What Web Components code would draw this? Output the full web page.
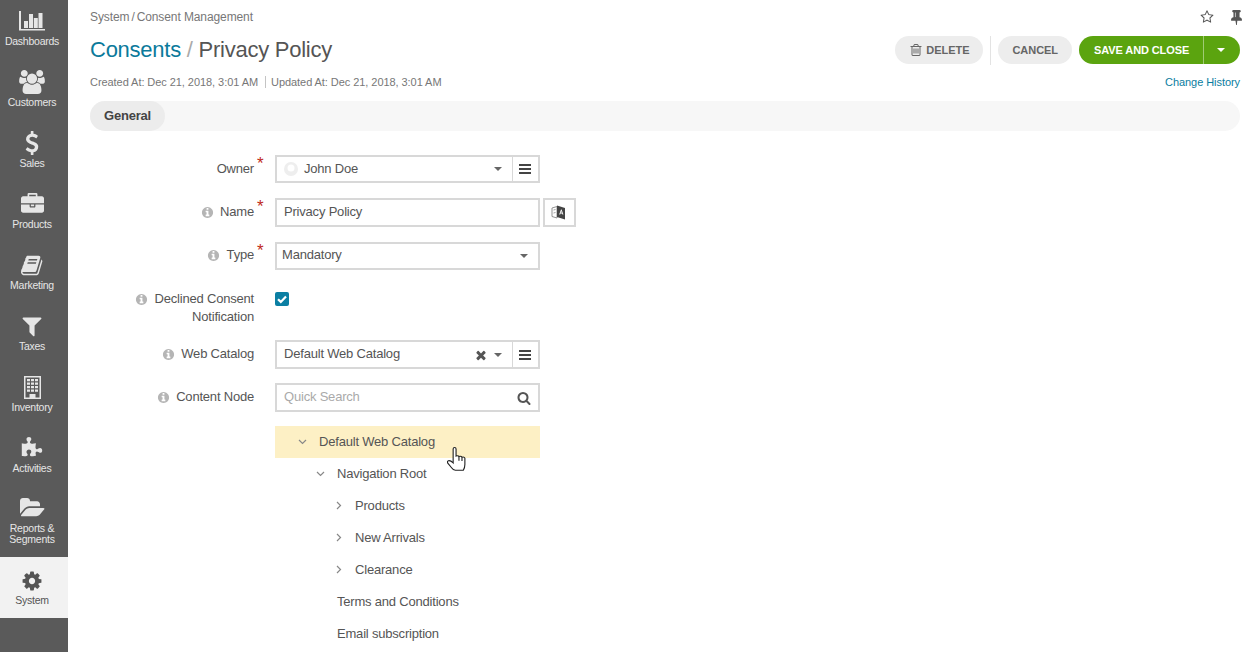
<!DOCTYPE html>
<html>
<head>
<meta charset="utf-8">
<title>Consents</title>
<style>
    html, body { margin: 0; padding: 0; height: 100%; background: #fff; }
    body { font-family: "Liberation Sans", Arial, sans-serif; overflow: hidden; }
    app-shell { height: 652px; }
</style>
</head>
<body>
<template id="nav-item-tpl">
    <style>
        :host {
            display: flex;
            flex-direction: column;
            align-items: center;
            height: 61px;
            box-sizing: border-box;
            padding: var(--icon-top, 1px) 4px 0 0;
            color: #e6e6e6;
            font-size: 10.5px;
            line-height: 11px;
            letter-spacing: -.25px;
            text-align: center;
        }
        :host([active]) { background: #f2f2f2; color: #555; padding-top: 12px; }
        .icon { display: flex; align-items: center; justify-content: center; height: 24px; margin-bottom: 3px; }
        :host([active]) .icon { margin-bottom: 2px; }
        ::slotted(svg) { fill: currentColor; display: block; }
    </style>
    <div class="icon"><slot name="icon"></slot></div>
    <div class="label"><slot></slot></div>
</template>

<template id="app-sidebar-tpl">
    <style>
        :host {
            display: block;
            width: 68px;
            flex: none;
            background: #5a5a5a;
            padding-top: 8px;
            box-sizing: border-box;
        }
    </style>
    <slot></slot>
</template>

<template id="app-shell-tpl">
    <style>
        :host { display: flex; align-items: stretch; position: relative; }
        main { flex: 1; min-width: 0; padding: 0 20px 0 22px; }
    </style>
    <slot name="side"></slot>
    <main><slot></slot></main>
</template>

<template id="page-header-tpl">
    <style>
        :host { display: block; color: #777; }
        .crumbs { display: flex; justify-content: space-between; align-items: center; height: 34px; font-size: 12px; letter-spacing: -.1px; }
        .crumbs b { font-weight: 400; margin: 0 2px; }
        .tools { display: flex; gap: 17px; align-items: center; margin-right: -2px; }
        .tools svg { display: block; fill: #555; }
        .head { display: flex; justify-content: space-between; align-items: center; height: 30px; margin-top: 1px; }
        h1 { margin: 0; font-size: 22px; font-weight: 400; color: #555; line-height: 30px; letter-spacing: -.25px; }
        h1 a { color: #0b7a9b; }
        h1 i { font-style: normal; color: #aaa; }
        .actions { display: flex; align-items: center; }
        .meta { display: flex; justify-content: space-between; align-items: center; height: 16px; margin-top: 9px; font-size: 11px; letter-spacing: -.06px; }
        .meta span + span { border-left: 1px solid #c4c4c4; margin-left: 7px; padding-left: 5px; }
        .meta a { color: #0a7da0; }
    </style>
    <div class="crumbs">
        <div>System<b>/</b>Consent Management</div>
        <div class="tools">
            <svg width="14" height="14" viewBox="0 0 1792 1792"><path d="M1201 1004l306-297-422-62-189-382-189 382-422 62 306 297-73 421 378-199 377 199zm527-357q0 22-26 48l-363 354 86 500q1 7 1 20 0 50-41 50-19 0-40-12l-449-236-449 236q-22 12-40 12-21 0-31.5-14.5t-10.5-35.5q0-6 2-20l86-500-364-354q-25-27-25-48 0-37 56-46l502-73 225-455q19-41 49-41t49 41l225 455 502 73q56 9 56 46z"/></svg>
            <svg width="11" height="15" viewBox="320 128 1152 1600" preserveAspectRatio="none"><path d="M800 864v-448q0-14-9-23t-23-9-23 9-9 23v448q0 14 9 23t23 9 23-9 9-23zm672 352q0 26-19 45t-45 19h-429l-51 483q-2 12-10.5 20.5t-20.5 8.5h-1q-27 0-32-27l-76-485h-404q-26 0-45-19t-19-45q0-123 78.5-221.5t177.5-98.5v-512q-52 0-90-38t-38-90 38-90 90-38h640q52 0 90 38t38 90-38 90-90 38v512q99 0 177.5 98.5t78.5 221.5z"/></svg>
        </div>
    </div>
    <div class="head">
        <h1><a>Consents</a> <i>/</i> Privacy Policy</h1>
        <div class="actions"><slot name="actions"></slot></div>
    </div>
    <div class="meta">
        <div><span>Created At: Dec 21, 2018, 3:01 AM</span><span>Updated At: Dec 21, 2018, 3:01 AM</span></div>
        <a>Change History</a>
    </div>
</template>

<template id="pill-button-tpl">
    <style>
        :host {
            display: inline-flex;
            align-items: center;
            gap: 3px;
            height: 28px;
            padding: 0 14px;
            border-radius: 14px;
            background: #ededed;
            color: #666;
            font-size: 11px;
            font-weight: 700;
            letter-spacing: -.05px;
            box-sizing: border-box;
            white-space: nowrap;
        }
        ::slotted(svg) { fill: #666; display: block; }
    </style>
    <slot></slot>
</template>

<template id="save-button-tpl">
    <style>
        :host { display: flex; height: 28px; margin-left: 7px; color: #fff; font-size: 11px; font-weight: 700; letter-spacing: -.1px; }
        .main, .more { background: #5ba40f; display: flex; align-items: center; }
        .main { width: 124px; box-sizing: border-box; padding-left: 15px; border-radius: 14px 0 0 14px; }
        .more { width: 36px; justify-content: center; border-left: 1px solid #a0cb75; border-radius: 0 14px 14px 0; }
        .more i { width: 0; height: 0; border: 4px solid transparent; border-top-color: #fff; border-bottom: 0; margin-right: 2px; }
    </style>
    <div class="main">SAVE AND CLOSE</div>
    <div class="more"><i></i></div>
</template>

<template id="tab-bar-tpl">
    <style>
        :host { display: flex; height: 30px; margin-top: 11px; background: #f7f7f7; border-radius: 15px; }
        div { width: 75px; background: #ececec; border-radius: 15px; font-size: 13px; font-weight: 700; color: #444; display: flex; align-items: center; justify-content: center; letter-spacing: -.2px; padding-bottom: 2px; box-sizing: border-box; }
    </style>
    <div><slot></slot></div>
</template>

<template id="form-row-tpl">
    <style>
        :host { display: grid; grid-template-columns: 164px 21px auto; justify-content: start; margin-bottom: 14px; color: #555; font-size: 13px; letter-spacing: -.2px; }
        .label { display: flex; justify-content: flex-end; gap: 6.5px; padding-top: var(--label-top, 5px); line-height: 18px; text-align: right; }
        .label svg { flex: none; width: 13px; height: 13px; margin-top: 3px; fill: #b5b5b5; }
        .star { color: #c0291c; font-size: 17px; line-height: 17px; padding-left: 3px; letter-spacing: 0; }
        :host(:not([info])) .label svg { display: none; }
        :host(:not([required])) .star { visibility: hidden; }
        .ctl { display: flex; align-items: flex-start; }
    </style>
    <div class="label">
        <svg viewBox="0 0 1792 1792"><path d="M1152 1376v-160q0-14-9-23t-23-9h-96v-512q0-14-9-23t-23-9h-320q-14 0-23 9t-9 23v160q0 14 9 23t23 9h96v320h-96q-14 0-23 9t-9 23v160q0 14 9 23t23 9h448q14 0 23-9t9-23zm-128-896v-160q0-14-9-23t-23-9h-192q-14 0-23 9t-9 23v160q0 14 9 23t23 9h192q14 0 23-9t9-23zm640 416q0 209-103 385.5t-279.5 279.5-385.5 103-385.5-103-279.5-279.5-103-385.5 103-385.5 279.5-279.5 385.5-103 385.5 103 279.5 279.5 103 385.5z"/></svg>
        <span><slot name="label"></slot></span>
    </div>
    <div class="star">*</div>
    <div class="ctl"><slot></slot></div>
</template>

<template id="field-box-tpl">
    <style>
        :host { display: flex; align-items: center; width: 265px; height: 29px; box-sizing: border-box; border: 2px solid #d8d8d8; background: #fff; padding-left: 7px; color: #555; font-size: 13px; letter-spacing: -.2px; }
        :host([compact]) { padding-left: 5px; }
        .text { flex: 1; display: flex; align-items: center; gap: 6px; min-width: 0; padding-bottom: var(--text-pb, 3px); }
        .tail { display: flex; align-items: center; gap: 6px; height: 100%; }
        .caret { display: none; width: 0; height: 0; border: 4.5px solid transparent; border-top-color: #666; border-bottom: 0; margin-right: 10px; }
        :host([caret]) .caret { display: block; }
        :host([menu]) .caret { margin-right: 4px; }
        .menu { display: none; height: 100%; border-left: 1px solid #d8d8d8; align-items: center; justify-content: center; box-sizing: border-box; padding-right: 1px; width: 26px; }
        :host([menu]) .menu { display: flex; }
        .menu i { display: block; width: 12px; height: 2px; background: #444; box-shadow: 0 4px 0 #444, 0 -4px 0 #444; }
        ::slotted(svg) { display: block; flex: none; }
    </style>
    <div class="text"><slot></slot></div>
    <div class="tail">
        <slot name="tail"></slot>
        <span class="caret"></span>
        <span class="menu"><i></i></span>
    </div>
</template>

<template id="tree-node-tpl">
    <style>
        :host { display: flex; align-items: center; height: 32px; width: 265px; box-sizing: border-box; padding-left: calc(var(--depth, 0) * 18px + 22px); padding-bottom: 1px; color: #555; font-size: 13px; letter-spacing: -.2px; }
        :host([hover]) { background: #fdf0c5; }
        .arrow { width: 22px; flex: none; display: flex; }
        svg { display: block; stroke: #888; fill: none; stroke-width: 1.2; }
        :host(:not([state])) svg { visibility: hidden; }
        :host([state="closed"]) svg { transform: rotate(-90deg); }
    </style>
    <div class="arrow"><svg width="11" height="11" viewBox="0 0 11 11"><path d="M2 4l3.5 3.5L9 4"/></svg></div>
    <slot></slot>
</template>

<app-shell>
    <app-sidebar slot="side">
        <nav-item><svg slot="icon" width="26" height="20" viewBox="0 0 26 20"><path d="M0 0h2v18h24v1.5H0z"/><path d="M5 10h4v7H5zM10 3h4v14h-4zM14.8 7h4v10h-4zM19.5 2h4v15h-4z"/></svg>Dashboards</nav-item>
        <nav-item><svg slot="icon" width="26" height="24" viewBox="0 0 1920 1792"><path d="M593 896q-162 5-265 128h-134q-82 0-138-40.5t-56-118.5q0-353 124-353 6 0 43.5 21t97.5 42.5 119 21.5q67 0 133-23-5 37-5 66 0 139 81 256zm1071 637q0 120-73 189.5t-194 69.5h-874q-121 0-194-69.5t-73-189.5q0-53 3.5-103.5t14-109 26.5-108.5 43-97.5 62-81 85.5-53.5 111.5-20q10 0 43 21.5t73 48 107 48 135 21.5 135-21.5 107-48 73-48 43-21.5q61 0 111.5 20t85.5 53.5 62 81 43 97.5 26.5 108.5 14 109 3.5 103.5zm-1024-1277q0 106-75 181t-181 75-181-75-75-181 75-181 181-75 181 75 75 181zm704 384q0 159-112.5 271.5t-271.5 112.5-271.5-112.5-112.5-271.5 112.5-271.5 271.5-112.5 271.5 112.5 112.5 271.5zm576 225q0 78-56 118.5t-138 40.5h-134q-103-123-265-128 81-117 81-256 0-29-5-66 66 23 133 23 59 0 119-21.5t97.5-42.5 43.5-21q124 0 124 353zm-128-609q0 106-75 181t-181 75-181-75-75-181 75-181 181-75 181 75 75 181z"/></svg>Customers</nav-item>
        <nav-item><svg slot="icon" width="24" height="24" viewBox="0 0 1792 1792"><path d="M1362 1185q0 153-99.5 263.5t-258.5 136.5v175q0 14-9 23t-23 9h-135q-13 0-22.5-9.5t-9.5-22.5v-175q-66-9-127.5-31t-101.5-44.5-74-48-46.5-37.5-17.5-18q-17-21-2-41l103-135q7-10 23-12 15-2 24 9l2 2q113 99 243 125 37 8 74 8 81 0 142.5-43t61.5-122q0-28-15-53t-33.5-42-58.5-37.5-66-32-80-32.5q-39-16-61.5-25t-61.5-26.5-62.5-31-56.5-35.5-53.5-42.5-43.5-49-35.5-58-21-66.5-8.5-78q0-138 98-242t255-134v-180q0-13 9.5-22.5t22.5-9.5h135q14 0 23 9t9 23v176q57 6 110.5 23t87 33.5 63.5 37.5 39 29 15 14q17 18 5 38l-81 146q-8 15-23 16-14 3-27-7-3-3-14.5-12t-39-26.5-58.5-32-74.5-26-85.5-11.5q-95 0-155 43t-60 111q0 26 8.5 48t29.5 41.5 39.5 33 56 31 60.5 27 70 27.5q53 20 81 31.5t76 35 75.5 42.5 62 50 53 63.5 31.5 76.5 13 94z"/></svg>Sales</nav-item>
        <nav-item><svg slot="icon" width="23" height="23" viewBox="0 0 1792 1792"><path d="M640 256h512v-128h-512v128zm1152 640v480q0 66-47 113t-113 47h-1472q-66 0-113-47t-47-113v-480h672v160q0 26 19 45t45 19h320q26 0 45-19t19-45v-160h672zm-768 0v128h-256v-128h256zm768-480v384h-1792v-384q0-66 47-113t113-47h352v-160q0-40 28-68t68-28h576q40 0 68 28t28 68v160h352q66 0 113 47t47 113z"/></svg>Products</nav-item>
        <nav-item><svg slot="icon" width="23" height="23" viewBox="0 0 1792 1792"><path d="M1639 478q40 57 18 129l-275 906q-19 64-76.5 107.5t-122.5 43.5h-923q-77 0-148.5-53.5t-99.5-131.5q-24-67-2-127 0-4 3-27t4-37q1-8-3-21.5t-3-19.5q2-11 8-21t16.5-23.5 16.5-23.5q23-38 45-91.5t30-91.5q3-10 .5-30t-.5-28q3-11 17-28t17-23q21-36 42-92t25-90q1-9-2.5-32t.5-28q4-13 22-30.5t22-22.5q19-26 42.5-84.5t27.5-96.5q1-8-3-25.5t-2-26.5q2-8 9-18t18-23 17-21q8-12 16.5-30.5t15-35 16-36 19.5-32 26.5-23.5 36-11.5 47.5 5.5l-1 3q38-9 51-9h761q74 0 114 56t18 130l-274 906q-36 119-71.5 153.5t-128.5 34.5h-869q-27 0-38 15-11 16-1 43 24 70 144 70h923q29 0 56-15.5t35-41.5l300-987q7-22 5-57 38 15 59 43zm-1064 2q-4 13 2 22.5t20 9.5h608q13 0 25.5-9.5t16.5-22.5l21-64q4-13-2-22.5t-20-9.5h-608q-13 0-25.5 9.5t-16.5 22.5zm-83 256q-4 13 2 22.5t20 9.5h608q13 0 25.5-9.5t16.5-22.5l21-64q4-13-2-22.5t-20-9.5h-608q-13 0-25.5 9.5t-16.5 22.5z"/></svg>Marketing</nav-item>
        <nav-item><svg slot="icon" width="24" height="24" viewBox="0 0 1792 1792"><path d="M1595 295q17 41-14 70l-493 493v742q0 42-39 59-13 5-25 5-27 0-45-19l-256-256q-19-19-19-45v-486l-493-493q-31-29-14-70 17-39 59-39h1280q42 0 59 39z"/></svg>Taxes</nav-item>
        <nav-item><svg slot="icon" width="17" height="23" viewBox="0 0 17 23"><path fill-rule="evenodd" d="M0 0h17v23H0zM1.5 1.5v20h4V18h6v3.5h4v-20z"/><path d="M3 3h3v2.2H3zM7 3h3v2.2H7zM11 3h3v2.2h-3zM3 6.5h3v2.2H3zM7 6.5h3v2.2H7zM11 6.5h3v2.2h-3zM3 10h3v2.2H3zM7 10h3v2.2H7zM11 10h3v2.2h-3zM3 13.5h3v2.2H3zM7 13.5h3v2.2H7zM11 13.5h3v2.2h-3z"/></svg>Inventory</nav-item>
        <nav-item><svg slot="icon" width="22" height="22" viewBox="0 0 1792 1792"><path d="M1728 1098q0 81-44.5 135t-123.5 54q-41 0-77.5-17.5t-59-38-56.5-38-71-17.5q-110 0-110 124 0 39 16 115t15 115v5q-22 0-33 1-34 3-97.5 11.5t-115.5 13.5-98 5q-61 0-103-26.5t-42-83.5q0-37 17.5-71t38-56.5 38-59 17.5-77.5q0-79-54-123.5t-135-44.5q-84 0-143 45.5t-59 127.5q0 43 15 83t33.5 64.5 33.5 53 15 50.5q0 45-46 89-37 35-117 35-95 0-245-24-9-2-27.5-4t-27.5-4l-13-2q-1 0-3-1-2 0-2-1v-1024q2 1 17.5 3.5t34 5 21.5 3.5q150 24 245 24 80 0 117-35 46-44 46-89 0-22-15-50.5t-33.5-53-33.5-64.5-15-83q0-82 59-127.5t144-45.5q80 0 134 44.5t54 123.5q0 41-17.5 77.5t-38 59-38 56.5-17.5 71q0 57 42 83.5t103 26.5q64 0 180-15t163-17v2q-1 2-3.5 17.5t-5 34-3.5 21.5q-24 150-24 245 0 80 35 117 44 46 89 46 22 0 50.5-15t53-33.5 64.5-33.5 83-15q82 0 127.5 59t45.5 143z"/></svg>Activities</nav-item>
        <nav-item style="--icon-top:0"><svg slot="icon" width="25" height="24" viewBox="0 0 1920 1792"><path d="M1879 952q0 31-31 66l-336 396q-43 51-120.5 86.5t-143.5 35.5h-1088q-34 0-60.5-13t-26.5-43q0-31 31-66l336-396q43-51 120.5-86.5t143.5-35.5h1088q34 0 60.5 13t26.5 43zm-343-344v160h-832q-94 0-197 47.5t-164 119.5l-337 396-5 6q0-4-.5-12.5t-.5-12.5v-960q0-92 66-158t158-66h320q92 0 158 66t66 158v32h544q92 0 158 66t66 158z"/></svg>Reports &amp;<br>Segments</nav-item>
        <nav-item active><svg slot="icon" width="22" height="22" viewBox="0 0 1792 1792"><path d="M1152 896q0-106-75-181t-181-75-181 75-75 181 75 181 181 75 181-75 75-181zm512-109v222q0 12-8 23t-20 13l-185 28q-19 54-39 91 35 50 107 138 10 12 10 25t-9 23q-27 37-99 108t-94 71q-12 0-26-9l-138-108q-44 23-91 38-16 136-29 186-7 28-36 28h-222q-14 0-24.5-8.5t-11.5-21.5l-28-184q-49-16-90-37l-141 107q-10 9-25 9-14 0-25-11-126-114-165-168-7-10-7-23 0-12 8-23 15-21 51-66.5t54-70.5q-27-50-41-99l-183-27q-13-2-21-12.5t-8-23.5v-222q0-12 8-23t19-13l186-28q14-46 39-92-40-57-107-138-10-12-10-24 0-10 9-23 26-36 98.5-107.5t94.5-71.5q13 0 26 10l138 107q44-23 91-38 16-136 29-186 7-28 36-28h222q14 0 24.5 8.5t11.5 21.5l28 184q49 16 90 37l142-107q9-9 24-9 13 0 25 10 129 119 165 170 7 8 7 22 0 12-8 23-15 21-51 66.5t-54 70.5q26 50 41 98l183 28q13 2 21 12.5t8 23.5z"/></svg>System</nav-item>
    </app-sidebar>

    <page-header>
        <pill-button slot="actions"><svg width="14" height="14" viewBox="0 0 1792 1792"><path d="M704 736v576q0 14-9 23t-23 9h-64q-14 0-23-9t-9-23v-576q0-14 9-23t23-9h64q14 0 23 9t9 23zm256 0v576q0 14-9 23t-23 9h-64q-14 0-23-9t-9-23v-576q0-14 9-23t23-9h64q14 0 23 9t9 23zm256 0v576q0 14-9 23t-23 9h-64q-14 0-23-9t-9-23v-576q0-14 9-23t23-9h64q14 0 23 9t9 23zm128 724v-948h-896v948q0 22 7 40.5t14.5 27 10.5 8.5h832q3 0 10.5-8.5t14.5-27 7-40.5zm-672-1076h448l-48-117q-7-9-17-11h-317q-10 2-17 11zm928 32v64q0 14-9 23t-23 9h-96v948q0 83-47 143.5t-113 60.5h-832q-66 0-113-58.5t-47-141.5v-952h-96q-14 0-23-9t-9-23v-64q0-14 9-23t23-9h309l70-167q15-37 54-63t79-26h320q40 0 79 26t54 63l70 167h309q14 0 23 9t9 23z"/></svg>DELETE</pill-button>
        <span slot="actions" style="width:1px;height:29px;background:#e3e3e3;margin:0 7px"></span>
        <pill-button slot="actions">CANCEL</pill-button>
        <save-button slot="actions"></save-button>
    </page-header>

    <tab-bar>General</tab-bar>

    <div style="height:24px"></div>

    <form-row required style="margin-bottom:15px"><span slot="label">Owner</span>
        <field-box caret menu style="height:28px;--text-pb:1px"><svg width="14" height="14" viewBox="0 0 14 14"><circle cx="7" cy="7" r="7" fill="#eee"/><circle cx="7" cy="6" r="3.5" fill="#fff"/></svg>John Doe</field-box>
    </form-row>
    <form-row info required style="margin-bottom:15px"><span slot="label">Name</span>
        <field-box>Privacy Policy</field-box>
        <field-box style="width:33px;margin-left:3px;padding:0;justify-content:center;--text-pb:0"><svg width="15" height="15" viewBox="0 0 15 15" style="margin-left:6px"><path d="M1 3l5-1.5v11.5L1 11.5z" fill="#fff" stroke="#888" stroke-width=".9"/><path d="M2.500 5l2-.5M2.500 8l2-.5" stroke="#999" stroke-width=".9"/><path d="M6 .5L14 3v11.5L6 12z" fill="#444"/><path d="M10 4.500l-1.800 5h1l.3-1h1.600l.3 1h1l-1.800-5zm.2 1.600l.5 1.600h-1z" fill="#fff"/></svg></field-box>
    </form-row>
    <form-row info required style="--label-top:4px"><span slot="label">Type</span>
        <field-box caret compact style="height:28px">Mandatory</field-box>
    </form-row>
    <form-row info style="--label-top:6px"><span slot="label">Declined Consent<br>Notification</span>
        <svg width="14" height="14" viewBox="0 0 14 14" style="margin-top:8px;display:block"><rect width="14" height="14" rx="2" fill="#0b7fa3"/><path d="M3 7.2l2.8 2.7L11 4.4" fill="none" stroke="#fff" stroke-width="2.2"/></svg>
    </form-row>
    <form-row info><span slot="label">Web Catalog</span>
        <field-box caret menu>Default Web Catalog
            <svg slot="tail" width="14" height="14" viewBox="0 0 1792 1792" fill="#555"><path d="M1490 1322q0 40-28 68l-136 136q-28 28-68 28t-68-28l-294-294-294 294q-28 28-68 28t-68-28l-136-136q-28-28-28-68t28-68l294-294-294-294q-28-28-28-68t28-68l136-136q28-28 68-28t68 28l294 294 294-294q28-28 68-28t68 28l136 136q28 28 28 68t-28 68l-294 294 294 294q28 28 28 68z"/></svg>
        </field-box>
    </form-row>
    <form-row info><span slot="label">Content Node</span>
        <field-box><span style="color:#aaa">Quick Search</span>
            <svg slot="tail" width="14" height="14" viewBox="0 0 1792 1792" fill="#555" style="margin-right:7px"><path d="M1216 832q0-185-131.5-316.5t-316.5-131.5-316.5 131.5-131.5 316.5 131.5 316.5 316.5 131.5 316.5-131.5 131.5-316.5zm512 832q0 52-38 90t-90 38q-54 0-90-38l-343-342q-179 124-399 124-143 0-273.5-55.5t-225-150-150-225-55.5-273.5 55.5-273.5 150-225 225-150 273.5-55.5 273.5 55.5 225 150 150 225 55.5 273.5q0 220-124 399l343 343q37 37 37 90z"/></svg>
        </field-box>
    </form-row>

    <div style="margin-left:185px">
        <tree-node hover state="open" style="--depth:0">Default Web Catalog</tree-node>
        <tree-node state="open" style="--depth:1">Navigation Root</tree-node>
        <tree-node state="closed" style="--depth:2">Products</tree-node>
        <tree-node state="closed" style="--depth:2">New Arrivals</tree-node>
        <tree-node state="closed" style="--depth:2">Clearance</tree-node>
        <tree-node style="--depth:1">Terms and Conditions</tree-node>
        <tree-node style="--depth:1">Email subscription</tree-node>
    </div>

    <svg style="position:absolute;left:447px;top:447px" width="19" height="24" viewBox="0.5 0.3 17 23" preserveAspectRatio="none"><path d="M6 13.5V2.2Q6 .8 7.3 .8T8.6 2.2V9q2-.9 2.6.4 2-.8 2.7.7 2-.7 2.6.9V17q0 3-1.4 5.6H8q-2 0-3.6-2.6L1.2 15.8Q.4 14 1.8 13.4 3.6 13 6 15.5z" fill="#fff" stroke="#222" stroke-width="1"/><path d="M11.2 9.5v4M13.9 10.2v3.5" fill="none" stroke="#222" stroke-width="1"/></svg>
</app-shell>

<script>
    // every element just clones its template into an open shadow root
    const names = ['nav-item', 'app-sidebar', 'app-shell', 'page-header', 'pill-button', 'save-button', 'tab-bar', 'form-row', 'field-box', 'tree-node'];

    names.forEach((name) => {
        customElements.define(name, class extends HTMLElement {
            constructor() {
                super();
                const tpl = document.getElementById(name + '-tpl');
                this.attachShadow({ mode: 'open' }).appendChild(tpl.content.cloneNode(true));
            }
        });
    });
</script>
</body>
</html>
